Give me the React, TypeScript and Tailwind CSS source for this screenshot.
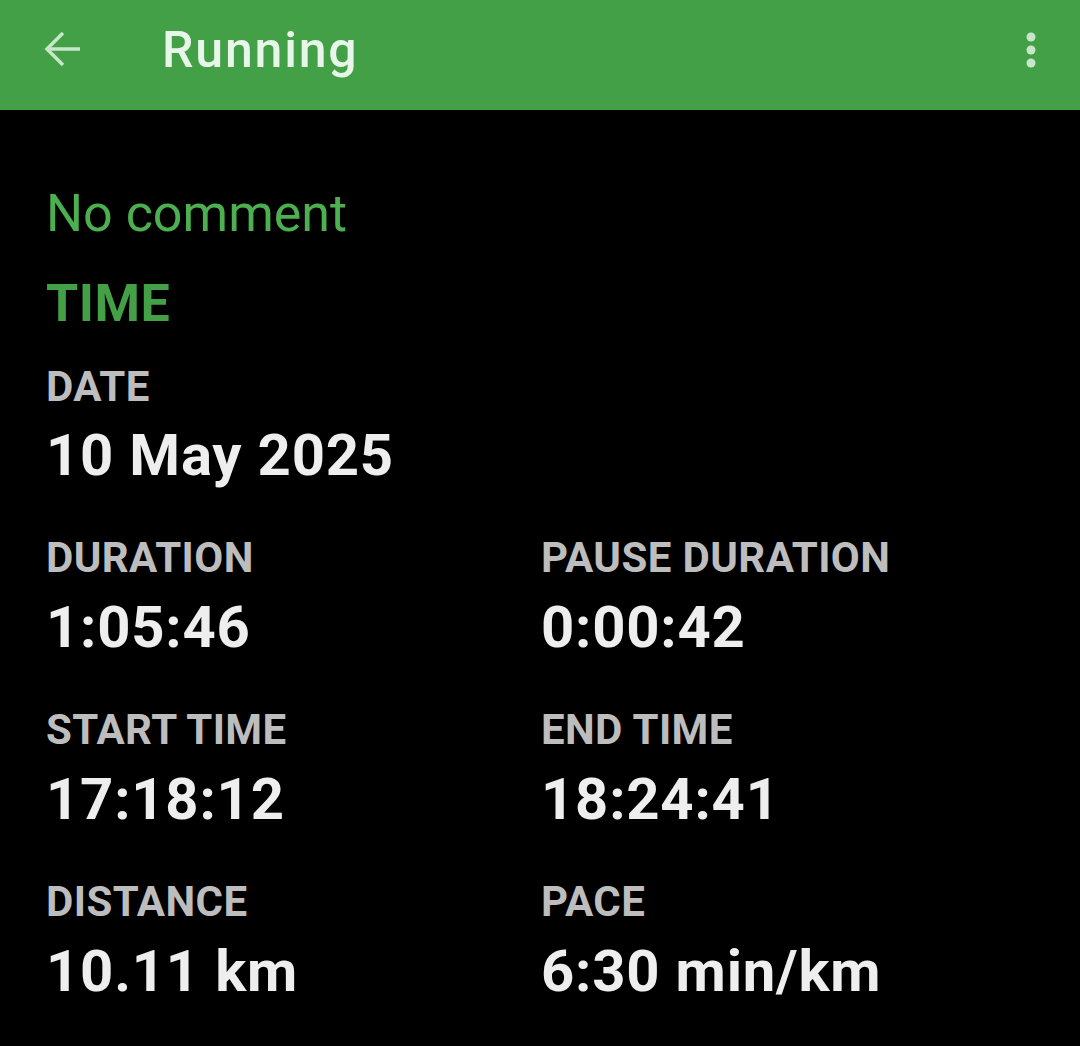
export default function App() {
  const rows = [
    [
      { label: "DURATION", value: "1:05:46" },
      { label: "PAUSE DURATION", value: "0:00:42" },
    ],
    [
      { label: "START TIME", value: "17:18:12" },
      { label: "END TIME", value: "18:24:41" },
    ],
    [
      { label: "DISTANCE", value: "10.11 km" },
      { label: "PACE", value: "6:30 min/km" },
    ],
  ];

  return (
    <div className="w-[1080px] h-[1046px] bg-black overflow-hidden" style={{ fontFamily: "Roboto, 'Noto Sans', sans-serif" }}>
      {/* App bar */}
      <div className="h-[110px] bg-[#43a047] flex items-start">
        <div className="w-[162px] h-[100px] flex items-center">
          <svg width="110" height="100" viewBox="0 0 110 100" className="shrink-0">
            <g fill="none" stroke="#c8e6c9" strokeWidth="3.5" strokeLinecap="butt" strokeLinejoin="miter">
              <path d="M47 49H80" />
              <path d="M63 33L47 49L63 65" />
            </g>
          </svg>
        </div>
        <div className="flex-1 h-[100px] flex items-center text-[50px] font-medium tracking-[1.8px] text-[#e8f5e9] leading-[100px]">
          Running
        </div>
        <div className="w-[100px] h-[100px] flex items-center justify-center pl-[2px]">
          <svg width="20" height="40" viewBox="0 0 20 40">
            <g fill="#c8e6c9">
              <circle cx="10" cy="7" r="4.5" />
              <circle cx="10" cy="20" r="4.5" />
              <circle cx="10" cy="33" r="4.5" />
            </g>
          </svg>
        </div>
      </div>

      {/* Content */}
      <div className="pl-[46px]">
        <div className="mt-[74px] h-[60px] leading-[60px] text-[52px] text-[#4caf50]">No comment</div>
        <div className="mt-[30px] h-[60px] leading-[60px] text-[52px] font-bold tracking-[0.5px] text-[#43a047]">TIME</div>
        <div className="mt-[28px] h-[50px] leading-[50px] text-[42px] font-bold tracking-[0.4px] text-[#bdbdbd]">DATE</div>
        <div className="mt-[13px] h-[60px] leading-[60px] text-[58px] font-bold tracking-[0.8px] text-[#eeeeee]">10 May 2025</div>

        <div className="grid grid-cols-[495px_1fr]">
          {rows.map((row) =>
            row.map((cell) => (
              <div key={cell.label} className="mt-[48px]">
                <div className="h-[50px] leading-[50px] text-[42px] font-bold tracking-[0.4px] text-[#bdbdbd] whitespace-nowrap">
                  {cell.label}
                </div>
                <div className="mt-[14px] h-[60px] leading-[60px] text-[58px] font-bold tracking-[0.8px] text-[#eeeeee] whitespace-nowrap">
                  {cell.value}
                </div>
              </div>
            ))
          )}
        </div>
      </div>
    </div>
  );
}
